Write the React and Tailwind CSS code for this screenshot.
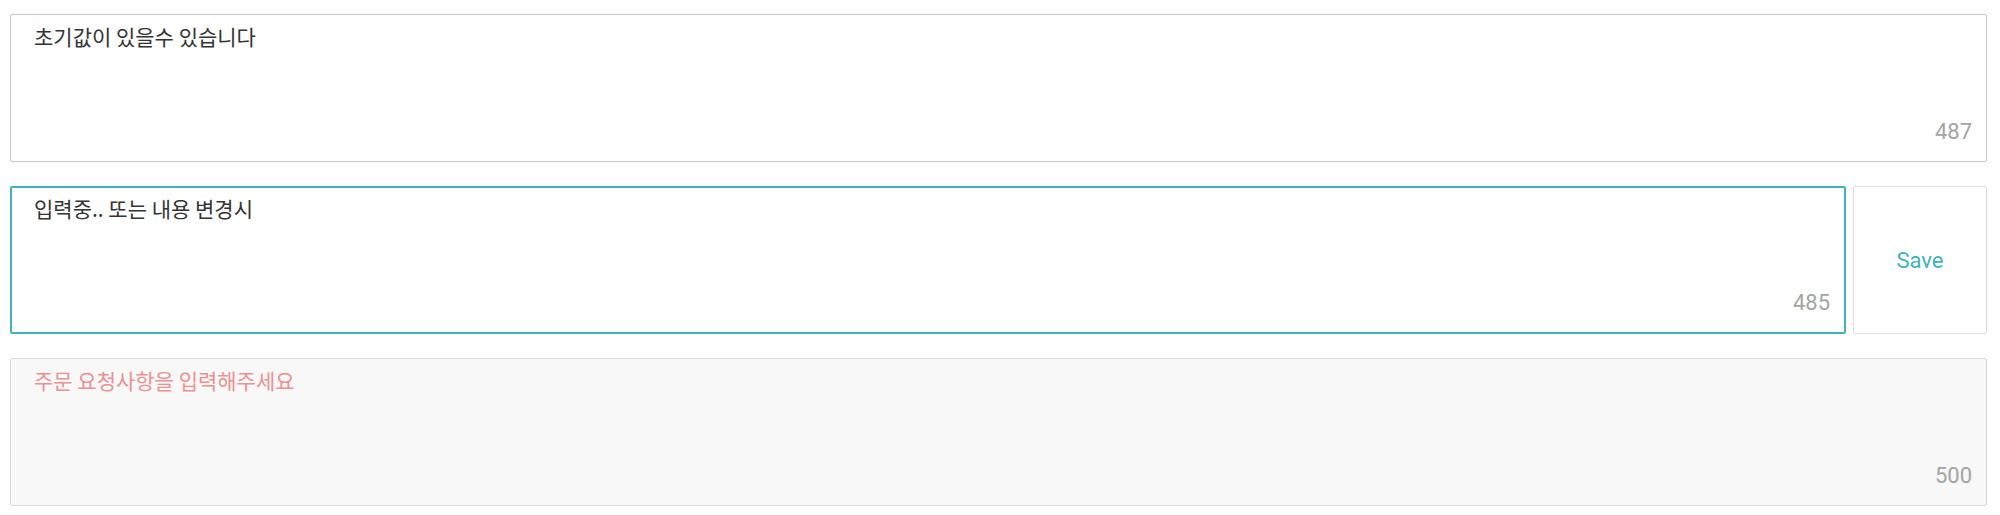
import React from 'react';

const Field = ({ value, placeholder, count, tone = 'default', className = '' }) => {
  const boxTone = {
    default: 'border border-[#c6c6c6] bg-white',
    active: 'border-2 border-[#3eb3b8] bg-white',
    empty: 'border border-[#d8d8d8] bg-[#f8f8f8]',
  }[tone];

  return (
    <div className={`relative h-[148px] rounded-[2px] ${boxTone} ${className}`}>
      <textarea
        className={`w-full h-full resize-none bg-transparent outline-none text-[21px] leading-[30px] text-[#333] placeholder:text-[#ec9090] ${
          tone === 'active' ? 'pl-[22px] pt-[5px]' : 'pl-[23px] pt-[6px]'
        }`}
        style={{ fontFamily: '"Noto Sans CJK KR", Roboto, sans-serif' }}
        defaultValue={value}
        placeholder={placeholder}
      />
      <span className="absolute right-[14px] bottom-[18px] text-[22px] leading-none text-[#a4a4a4] font-['Roboto',sans-serif]">
        {count}
      </span>
    </div>
  );
};

export default function App() {
  return (
    <div className="w-[2000px] h-[515px] bg-white pl-[10px] pr-[13px] pt-[14px] flex flex-col gap-[24px]">
      <Field value="초기값이 있을수 있습니다" count="487" />

      <div className="flex gap-[7px]">
        <Field value="입력중.. 또는 내용 변경시" count="485" tone="active" className="flex-1" />
        <button className="w-[134px] h-[148px] rounded-[2px] border border-[#dedede] bg-white text-[22px] text-[#3eb3b8] font-['Roboto',sans-serif]">
          Save
        </button>
      </div>

      <Field placeholder="주문 요청사항을 입력해주세요" count="500" tone="empty" />
    </div>
  );
}
